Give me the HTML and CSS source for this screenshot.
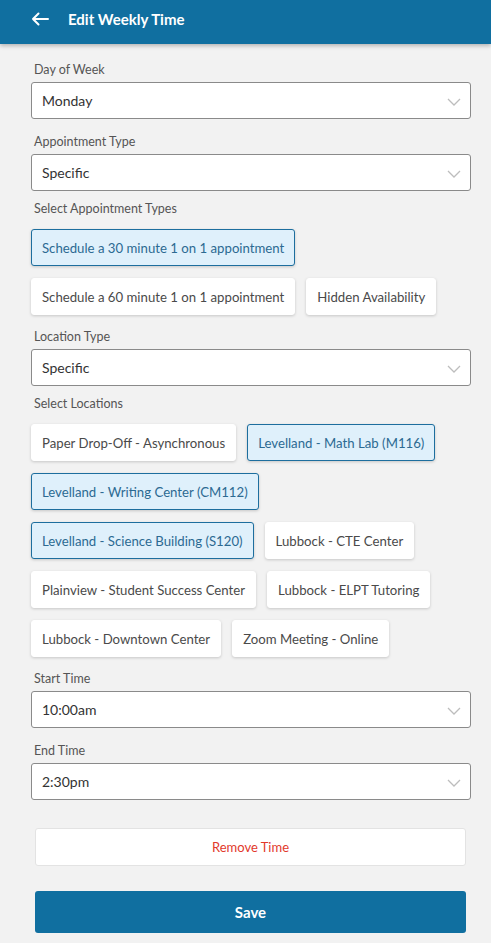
FILE: index.html
```html
<!DOCTYPE html>
<html lang="en">
<head>
<meta charset="utf-8">
<title>Edit Weekly Time</title>
<link rel="stylesheet" href="styles.css">
</head>
<body>
<header class="topbar">
  <svg class="back" width="18" height="14" viewBox="0 0 18 14" aria-hidden="true">
    <path d="M17 7H2M7.5 1.5L2 7l5.5 5.5" fill="none" stroke="#fff" stroke-width="2" stroke-linecap="round" stroke-linejoin="round"/>
  </svg>
  <h1 class="title">Edit Weekly Time</h1>
</header>
<main class="form">
  <div class="field">
    <label class="label">Day of Week</label>
    <div class="select"><span>Monday</span><svg class="chev" width="14" height="8" viewBox="0 0 14 8"><path d="M1 1l6 6 6-6" fill="none" stroke="#bdbdbd" stroke-width="1.3"/></svg></div>
  </div>
  <div class="field">
    <label class="label">Appointment Type</label>
    <div class="select"><span>Specific</span><svg class="chev" width="14" height="8" viewBox="0 0 14 8"><path d="M1 1l6 6 6-6" fill="none" stroke="#bdbdbd" stroke-width="1.3"/></svg></div>
  </div>
  <div class="group">
    <label class="label">Select Appointment Types</label>
    <div class="chips">
      <span class="chip on">Schedule a 30 minute 1 on 1 appointment</span>
      <span class="chip">Schedule a 60 minute 1 on 1 appointment</span>
      <span class="chip">Hidden Availability</span>
    </div>
  </div>
  <div class="field">
    <label class="label">Location Type</label>
    <div class="select"><span>Specific</span><svg class="chev" width="14" height="8" viewBox="0 0 14 8"><path d="M1 1l6 6 6-6" fill="none" stroke="#bdbdbd" stroke-width="1.3"/></svg></div>
  </div>
  <div class="group">
    <label class="label">Select Locations</label>
    <div class="chips">
      <span class="chip">Paper Drop-Off - Asynchronous</span>
      <span class="chip on">Levelland - Math Lab (M116)</span>
      <span class="chip on">Levelland - Writing Center (CM112)</span>
      <span class="chip on">Levelland - Science Building (S120)</span>
      <span class="chip">Lubbock - CTE Center</span>
      <span class="chip">Plainview - Student Success Center</span>
      <span class="chip">Lubbock - ELPT Tutoring</span>
      <span class="chip">Lubbock - Downtown Center</span>
      <span class="chip">Zoom Meeting - Online</span>
    </div>
  </div>
  <div class="field">
    <label class="label">Start Time</label>
    <div class="select"><span>10:00am</span><svg class="chev" width="14" height="8" viewBox="0 0 14 8"><path d="M1 1l6 6 6-6" fill="none" stroke="#bdbdbd" stroke-width="1.3"/></svg></div>
  </div>
  <div class="field">
    <label class="label">End Time</label>
    <div class="select"><span>2:30pm</span><svg class="chev" width="14" height="8" viewBox="0 0 14 8"><path d="M1 1l6 6 6-6" fill="none" stroke="#bdbdbd" stroke-width="1.3"/></svg></div>
  </div>
  <div class="actions">
    <button class="btn remove">Remove Time</button>
    <button class="btn save">Save</button>
  </div>
</main>
</body>
</html>
```
FILE: styles.css
```css
* { box-sizing: border-box; }
html, body { margin: 0; padding: 0; }
body {
  background: #f2f2f2;
  font-family: Lato, "Noto Sans", sans-serif;
  color: #4a4a4a;
  width: 491px;
  height: 943px;
  overflow: hidden;
}
.topbar {
  height: 44px;
  background: #106fa0;
  display: flex;
  align-items: center;
  padding: 0 0 7px 31px;
  box-shadow: 0 2px 4px rgba(0,0,0,0.25);
  position: relative;
}
.back { display: block; margin-right: 19px; }
.title {
  margin: 0;
  color: #fff;
  font-size: 15px;
  font-weight: 700;
}
.form {
  padding: 18px 20px 0 31px;
  display: flex;
  flex-direction: column;
}
.label {
  display: block;
  font-size: 12.5px;
  line-height: 16px;
  color: #555;
  padding-left: 3px;
  margin-bottom: 4px;
}
.field { margin-bottom: 15px; }
.field + .group { margin-top: -5px; }
.group { margin-bottom: 14px; }
.group .label { margin-bottom: 12px; }
.select {
  height: 37px;
  background: #fff;
  border: 1px solid #8a8a8a;
  border-radius: 3px;
  display: flex;
  align-items: center;
  justify-content: space-between;
  padding: 0 9px 0 10px;
  font-size: 14px;
  color: #333;
}
.chev { display: block; margin-top: 3px; }
.chips {
  display: flex;
  flex-wrap: wrap;
  gap: 12px 11px;
}
.chip {
  height: 37px;
  display: inline-flex;
  align-items: center;
  padding: 0 10px;
  background: #fff;
  border: 1px solid #fff;
  border-radius: 3px;
  box-shadow: 0 1px 3px rgba(0,0,0,0.18);
  font-size: 13.2px;
  color: #4a4a4a;
  white-space: nowrap;
}
.chip.on {
  background: #dff0fb;
  border-color: #1d6e9e;
  color: #2c6a92;
}
.actions {
  display: flex;
  flex-direction: column;
  padding: 13px 5px 0 4px;
  gap: 25px;
}
.btn {
  font-family: Lato, "Noto Sans", sans-serif;
  border-radius: 3px;
  cursor: pointer;
}
.remove {
  height: 38px;
  background: #fff;
  border: 1px solid #e3e3e3;
  color: #e2392b;
  font-size: 13px;
}
.save {
  height: 42px;
  background: #106fa0;
  border: none;
  color: #fff;
  font-size: 15px;
  font-weight: 700;
}
```
